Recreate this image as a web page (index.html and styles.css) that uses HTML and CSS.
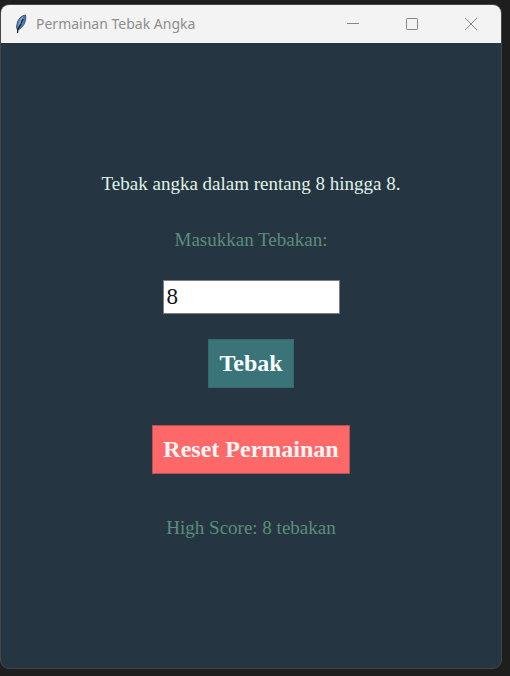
FILE: index.html
```html
<!DOCTYPE html>
<html lang="id">
<head>
<meta charset="utf-8">
<title>Permainan Tebak Angka</title>
<link rel="stylesheet" href="styles.css">
</head>
<body>
<div class="window">
  <header class="titlebar">
    <svg class="feather" viewBox="0 0 16 22" aria-hidden="true">
      <path d="M12.500 2C9 2.500 6 5 4.500 9L3.500 14l1 3 3-1.500c3.500-3 6-8 5-13.500z" fill="#4a7fc4" stroke="#4b4d52" stroke-width="1"/>
      <path d="M6 9c1-3 2.500-4.500 4.500-5.500L8 9l-3 5z" fill="#7fabe0"/>
      <path d="M10 6L8 10.500M8 11l-3 5-.5 4" fill="none" stroke="#181c24" stroke-width="1.300"/>
    </svg>
    <h1 class="title">Permainan Tebak Angka</h1>
    <div class="controls">
      <button class="control" type="button" aria-label="Minimalkan"><svg viewBox="0 0 14 14"><path d="M1 6.500h12"/></svg></button>
      <button class="control" type="button" aria-label="Maksimalkan"><svg viewBox="0 0 14 14"><rect x="1.500" y="1.500" width="11" height="11" rx="1"/></svg></button>
      <button class="control" type="button" aria-label="Tutup"><svg viewBox="0 0 14 14"><path d="M1 1l12 12M13 1L1 13"/></svg></button>
    </div>
  </header>
  <main class="game">
    <p class="prompt">Tebak angka dalam rentang 8 hingga 8.</p>
    <label class="label" for="guess">Masukkan Tebakan:</label>
    <input class="guess" id="guess" type="text" value="8">
    <button class="button" type="button">Tebak</button>
    <button class="button reset" type="button">Reset Permainan</button>
    <p class="score">High Score: 8 tebakan</p>
  </main>
</div>
</body>
</html>
```

FILE: styles.css
```css
* { box-sizing: border-box; }

body {
  margin: 0;
  min-height: 100vh;
  padding: 4px 8px 7px 0;
  display: flex;
  background: #1e1e1e;
  font-family: "Liberation Serif", "Times New Roman", serif;
}

.window {
  flex: 1;
  display: flex;
  flex-direction: column;
  border: 1px solid #444648;
  border-radius: 9px;
  overflow: hidden;
  background: #253642;
}

.titlebar {
  display: flex;
  align-items: center;
  height: 38px;
  padding-left: 12px;
  background: #f3f3f3;
}

.feather { width: 16px; height: 22px; }

.title {
  flex: 1;
  margin: 0 0 0 7px;
  font: 400 14px/20px "Noto Sans", sans-serif;
  color: #8d8d8d;
}

.controls { display: flex; padding-right: 1px; }

.control {
  width: 59px;
  height: 38px;
  padding: 0;
  border: 0;
  background: none;
}

.control svg {
  display: block;
  width: 14px;
  height: 14px;
  margin: 0 auto;
  fill: none;
  stroke: #858585;
}

.game {
  flex: 1;
  display: flex;
  flex-direction: column;
  align-items: center;
  justify-content: center;
  font-size: 19px;
  line-height: 24px;
}

.prompt { margin: 0 0 32px; color: #e0f2e9; }

.label { margin-bottom: 28px; color: #5c8d7b; }

.guess {
  width: 177px;
  height: 34px;
  margin-bottom: 25px;
  padding: 0 3px;
  border: 1px solid #7a7f89;
  background: #fff;
  color: #10131c;
  font: 23px/32px "Liberation Serif", serif;
}

.button {
  height: 49px;
  margin-bottom: 37px;
  padding: 0 10px;
  border: 1px solid #356a6e;
  background: #3a7478;
  color: #f5ffff;
  font: bold 24px/28px "Liberation Serif", serif;
}

.reset {
  margin-bottom: 42px;
  border-color: #b35358;
  background: #ff6868;
  color: #fff5f5;
}

.score { margin: 0; color: #5c8d7b; }
```
